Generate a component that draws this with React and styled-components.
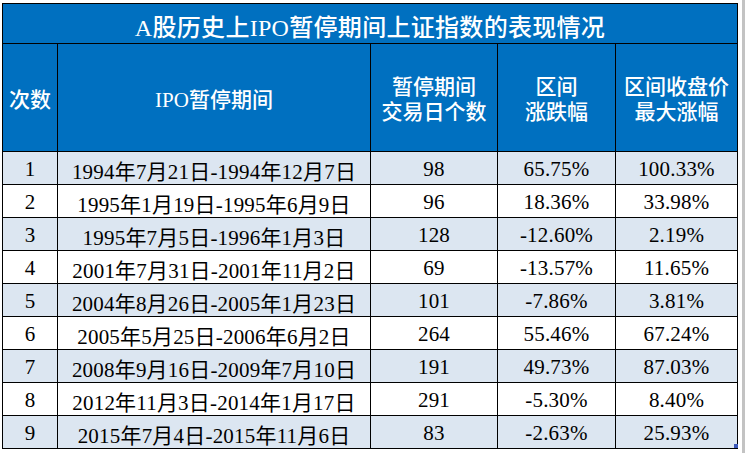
import React from "react";
import styled, { createGlobalStyle } from "styled-components";

const Global = createGlobalStyle`
  html, body { margin: 0; padding: 0; background: #ffffff; }
  #root { width: 745px; height: 453px; overflow: hidden; }
`;

const Page = styled.div`
  display: flex;
  width: 745px;
  height: 453px;
`;

const Sheet = styled.div`
  padding: 3px 0 0 2px;
`;

const EdgeStrip = styled.div`
  margin-left: auto;
  width: 3px;
  background: #c3c3c3;
`;

const Grid = styled.div`
  position: relative;
  display: grid;
  grid-template-columns: 54px 312px 126px 117px 121px;
  grid-template-rows: 39px 107px repeat(9, 32px);
  gap: 1px;
  padding: 1px;
  background: #000000;
`;

const TitleCell = styled.div`
  grid-column: 1 / -1;
  background: #0070c0;
  color: #ffffff;
  display: flex;
  align-items: center;
  justify-content: center;
  padding-top: 3px;
  font-family: "Liberation Serif", "Noto Sans CJK SC", serif;
  font-size: 24px;
  font-weight: 500;
  letter-spacing: 0.3px;
`;

const HeadCell = styled.div`
  background: #0070c0;
  color: #ffffff;
  display: flex;
  align-items: center;
  justify-content: center;
  text-align: center;
  padding-top: 5px;
  font-family: "Liberation Serif", "Noto Sans CJK SC", sans-serif;
  font-size: 21px;
  line-height: 25px;
  font-weight: 500;
`;

const Cell = styled.div`
  background: ${(p) => (p.$alt ? "#dce6f1" : "#ffffff")};
  color: #000000;
  display: flex;
  align-items: center;
  justify-content: center;
  padding-top: 3px;
  font-family: "Liberation Serif", "Noto Sans CJK SC", serif;
  font-size: 21px;
  letter-spacing: 0.2px;
  white-space: nowrap;
`;

const Handle = styled.div`
  position: absolute;
  right: 0;
  bottom: 1px;
  width: 4px;
  height: 4px;
  background: #3b57b8;
`;

const rows = [
  ["1", "1994年7月21日-1994年12月7日", "98", "65.75%", "100.33%"],
  ["2", "1995年1月19日-1995年6月9日", "96", "18.36%", "33.98%"],
  ["3", "1995年7月5日-1996年1月3日", "128", "-12.60%", "2.19%"],
  ["4", "2001年7月31日-2001年11月2日", "69", "-13.57%", "11.65%"],
  ["5", "2004年8月26日-2005年1月23日", "101", "-7.86%", "3.81%"],
  ["6", "2005年5月25日-2006年6月2日", "264", "55.46%", "67.24%"],
  ["7", "2008年9月16日-2009年7月10日", "191", "49.73%", "87.03%"],
  ["8", "2012年11月3日-2014年1月17日", "291", "-5.30%", "8.40%"],
  ["9", "2015年7月4日-2015年11月6日", "83", "-2.63%", "25.93%"],
];

export default function App() {
  return (
    <>
      <Global />
      <Page>
        <Sheet>
          <Grid>
            <TitleCell>A股历史上IPO暂停期间上证指数的表现情况</TitleCell>
            <HeadCell>次数</HeadCell>
            <HeadCell>IPO暂停期间</HeadCell>
            <HeadCell>
              暂停期间
              <br />
              交易日个数
            </HeadCell>
            <HeadCell>
              区间
              <br />
              涨跌幅
            </HeadCell>
            <HeadCell>
              区间收盘价
              <br />
              最大涨幅
            </HeadCell>
            {rows.map((r, i) =>
              r.map((v, j) => (
                <Cell key={`${i}-${j}`} $alt={i % 2 === 0}>
                  {v}
                </Cell>
              ))
            )}
            <Handle />
          </Grid>
        </Sheet>
        <EdgeStrip />
      </Page>
    </>
  );
}
